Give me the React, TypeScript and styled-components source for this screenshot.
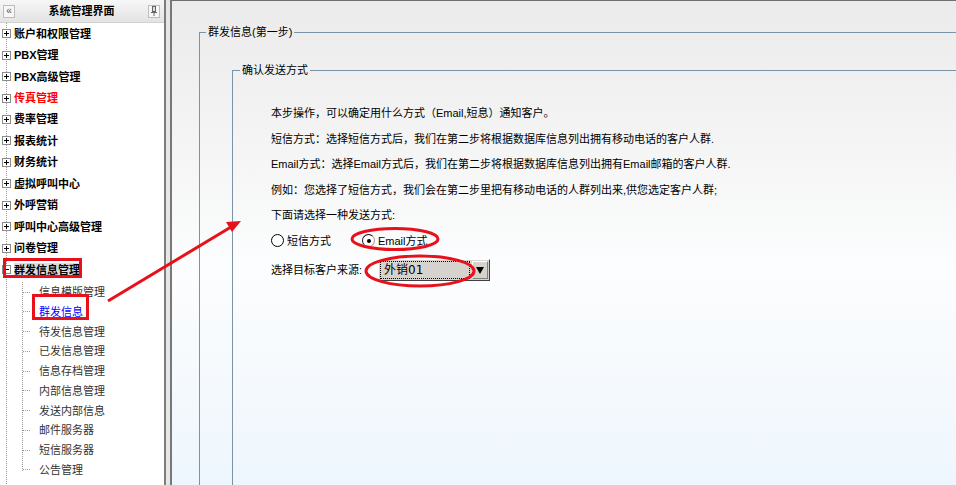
import React from 'react';
import styled, { createGlobalStyle } from 'styled-components';

const GlobalStyle = createGlobalStyle`
  html, body {
    margin: 0;
    padding: 0;
  }
  body {
    font-family: 'Liberation Sans', 'Noto Sans CJK SC', sans-serif;
    font-size: 11px;
    color: #000;
  }
`;

const Page = styled.div`
  position: relative;
  display: flex;
  width: 956px;
  height: 485px;
  overflow: hidden;
  background: #e6e6e6;
`;

const Sidebar = styled.aside`
  flex: none;
  width: 164px;
  display: flex;
  flex-direction: column;
  background: #fff;
  border-right: 2px solid #7d7d7d;
`;

const SideHeader = styled.div`
  flex: none;
  height: 22px;
  display: flex;
  align-items: center;
  justify-content: space-between;
  padding: 0 4px 0 3px;
  background: linear-gradient(to bottom, #f7f7f7, #e3e3e3);
  border-bottom: 1px solid #d2d2d2;
`;

const HeaderButton = styled.span`
  width: 10px;
  height: 11px;
  display: flex;
  align-items: center;
  justify-content: center;
  border: 1px solid #bdbdbd;
  background: #f7f7f7;
  color: #555;
  font-size: 10px;
  line-height: 1;
`;

const SideTitle = styled.span`
  font-weight: bold;
  font-size: 11px;
  line-height: 14px;
`;

const dotted = 'repeating-linear-gradient(to bottom, #999 0 1px, transparent 1px 2px)';

const Tree = styled.ul`
  flex: 1;
  margin: 0;
  padding: 0;
  list-style: none;
  background-image: ${dotted};
  background-size: 1px 100%;
  background-position: 6px 0;
  background-repeat: no-repeat;
`;

const NodeRow = styled.div`
  height: 21.45px;
  display: flex;
  align-items: center;
  padding-left: 2px;
`;

const NodeLabel = styled.span<{ $red?: boolean; $active?: boolean }>`
  margin-left: 3px;
  font-weight: bold;
  line-height: 14px;
  color: ${(p) => (p.$red ? '#ff0000' : '#000')};
  background: ${(p) => (p.$active ? '#dcdcdc' : 'transparent')};
`;

const Children = styled.ul`
  margin: 2px 0 0;
  padding: 0;
  list-style: none;
  background-image: ${dotted};
  background-size: 1px calc(100% - 9px);
  background-position: 22px 0;
  background-repeat: no-repeat;
`;

const ChildRow = styled.li`
  height: 19.75px;
  display: flex;
  align-items: center;
  padding-left: 23px;
`;

const Tick = styled.span`
  width: 7px;
  border-top: 1px dotted #999;
  margin-right: 9px;
`;

const ChildLabel = styled.span<{ $current?: boolean }>`
  line-height: 14px;
  color: ${(p) => (p.$current ? '#0000ff' : '#333')};
`;

const Main = styled.main`
  flex: 1;
  min-width: 0;
  margin-left: 4px;
  padding: 24px 0 0 27px;
  border-left: 2px solid #787878;
  border-top: 1px solid #6f6f6f;
  background: linear-gradient(to bottom, #ebebeb 0%, #f3f3f3 25%, #fcfdfe 55%, #eef6fd 100%);
  overflow: hidden;
`;

const Fieldset = styled.fieldset<{ $inner?: boolean }>`
  box-sizing: border-box;
  min-width: 0;
  width: 1000px;
  min-height: 520px;
  margin: ${(p) => (p.$inner ? '24px 0 0 26px' : '0')};
  padding: 0 0 0 ${(p) => (p.$inner ? 7 : 6)}px;
  border: 1px solid #7a93a6;
`;

const Legend = styled.legend`
  padding: 0 2px;
  font-size: 11px;
  line-height: 14px;
`;

const FormBody = styled.div`
  padding: 29px 0 0 31px;
`;

const Note = styled.p`
  margin: 0 0 11.5px;
  line-height: 14px;
`;

const RadioRow = styled.div`
  display: flex;
  align-items: center;
  gap: 31px;
  height: 14px;
  margin-bottom: 11.5px;
`;

const RadioLabel = styled.label`
  display: flex;
  align-items: center;
  gap: 3px;
  line-height: 14px;
`;

const RadioMark = styled.span<{ $checked?: boolean }>`
  box-sizing: border-box;
  width: 13px;
  height: 13px;
  border-radius: 50%;
  border: 1.5px solid #000;
  border-color: ${(p) => (p.$checked ? '#111 #9a9a9a #9a9a9a #111' : '#000')};
  background: #fff;
  display: flex;
  align-items: center;
  justify-content: center;
  &::after {
    content: '';
    width: 4px;
    height: 4px;
    border-radius: 50%;
    background: ${(p) => (p.$checked ? '#000' : 'transparent')};
  }
`;

const SourceRow = styled.div`
  display: flex;
  align-items: center;
  line-height: 14px;
`;

const Select = styled.div`
  box-sizing: border-box;
  margin-left: 16px;
  width: 112px;
  height: 22px;
  display: flex;
  padding: 1px;
  background: #d6d3ce;
  border: 1px solid;
  border-color: #fff #404040 #404040 #fff;
`;

const SelectValue = styled.span`
  flex: 1;
  display: flex;
  align-items: center;
  padding-left: 4px;
  outline: 1px dotted #000;
  outline-offset: -1px;
  font-family: 'DejaVu Sans', 'Noto Sans CJK SC', sans-serif;
  font-size: 12px;
`;

const SelectArrow = styled.span`
  box-sizing: border-box;
  width: 16px;
  margin-left: 2px;
  display: flex;
  align-items: center;
  justify-content: center;
  border: 1px solid;
  border-color: #fff #808080 #808080 #fff;
  &::after {
    content: '';
    border-left: 4px solid transparent;
    border-right: 4px solid transparent;
    border-top: 7px solid #000;
  }
`;

const Marks = styled.svg`
  position: absolute;
  left: 0;
  top: 0;
  pointer-events: none;
`;

const Toggle = ({ open }: { open?: boolean }) => (
  <svg width="9" height="9" viewBox="0 0 9 9">
    <rect x="0.5" y="0.5" width="8" height="8" fill="#fff" stroke="#8c8c8c" />
    <path d="M2 4.5h5" stroke="#000" />
    {!open && <path d="M4.5 2v5" stroke="#000" />}
  </svg>
);

const Pin = () => (
  <svg width="8" height="10" viewBox="0 0 8 10">
    <rect x="2.5" y="0.5" width="3" height="5" fill="#ddd" stroke="#666" />
    <path d="M1 6.5h6M4 6.5V10" stroke="#666" />
  </svg>
);

const topNodes = [
  '账户和权限管理',
  'PBX管理',
  'PBX高级管理',
  '传真管理',
  '费率管理',
  '报表统计',
  '财务统计',
  '虚拟呼叫中心',
  '外呼营销',
  '呼叫中心高级管理',
  '问卷管理',
];

const childNodes = [
  '信息模版管理',
  '群发信息',
  '待发信息管理',
  '已发信息管理',
  '信息存档管理',
  '内部信息管理',
  '发送内部信息',
  '邮件服务器',
  '短信服务器',
  '公告管理',
];

const red = '#e8101b';

const App = () => {
  return (
    <>
      <GlobalStyle />
      <Page>
        <Sidebar>
          <SideHeader>
            <HeaderButton>«</HeaderButton>
            <SideTitle>系统管理界面</SideTitle>
            <HeaderButton>
              <Pin />
            </HeaderButton>
          </SideHeader>
          <Tree>
            {topNodes.map((name) => (
              <li key={name}>
                <NodeRow>
                  <Toggle />
                  <NodeLabel $red={name === '传真管理'}>{name}</NodeLabel>
                </NodeRow>
              </li>
            ))}
            <li>
              <NodeRow>
                <Toggle open />
                <NodeLabel $active>群发信息管理</NodeLabel>
              </NodeRow>
              <Children>
                {childNodes.map((name) => (
                  <ChildRow key={name}>
                    <Tick />
                    <ChildLabel $current={name === '群发信息'}>{name}</ChildLabel>
                  </ChildRow>
                ))}
              </Children>
            </li>
          </Tree>
        </Sidebar>
        <Main>
          <Fieldset>
            <Legend>群发信息(第一步)</Legend>
            <Fieldset $inner>
              <Legend>确认发送方式</Legend>
              <FormBody>
                <Note>本步操作，可以确定用什么方式（Email,短息）通知客户。</Note>
                <Note>短信方式：选择短信方式后，我们在第二步将根据数据库信息列出拥有移动电话的客户人群.</Note>
                <Note>Email方式：选择Email方式后，我们在第二步将根据数据库信息列出拥有Email邮箱的客户人群.</Note>
                <Note>例如：您选择了短信方式，我们会在第二步里把有移动电话的人群列出来,供您选定客户人群;</Note>
                <Note>下面请选择一种发送方式:</Note>
                <RadioRow>
                  <RadioLabel>
                    <RadioMark />
                    短信方式
                  </RadioLabel>
                  <RadioLabel>
                    <RadioMark $checked />
                    Email方式
                  </RadioLabel>
                </RadioRow>
                <SourceRow>
                  选择目标客户来源:
                  <Select>
                    <SelectValue>外销01</SelectValue>
                    <SelectArrow />
                  </Select>
                </SourceRow>
              </FormBody>
            </Fieldset>
          </Fieldset>
        </Main>
        <Marks width="956" height="485" viewBox="0 0 956 485">
          <rect x="4.5" y="259.5" width="76" height="17" fill="none" stroke={red} strokeWidth="3" />
          <rect x="33.5" y="295.5" width="54" height="23" fill="none" stroke={red} strokeWidth="3" />
          <line x1="108" y1="301" x2="231" y2="227" stroke={red} strokeWidth="3" />
          <polygon points="241,221 226,222 232,232" fill={red} />
          <ellipse cx="395" cy="239" rx="43" ry="10.5" fill="none" stroke={red} strokeWidth="3" />
          <ellipse cx="420" cy="271" rx="54" ry="15" fill="none" stroke={red} strokeWidth="3" />
        </Marks>
      </Page>
    </>
  );
};

export default App;
